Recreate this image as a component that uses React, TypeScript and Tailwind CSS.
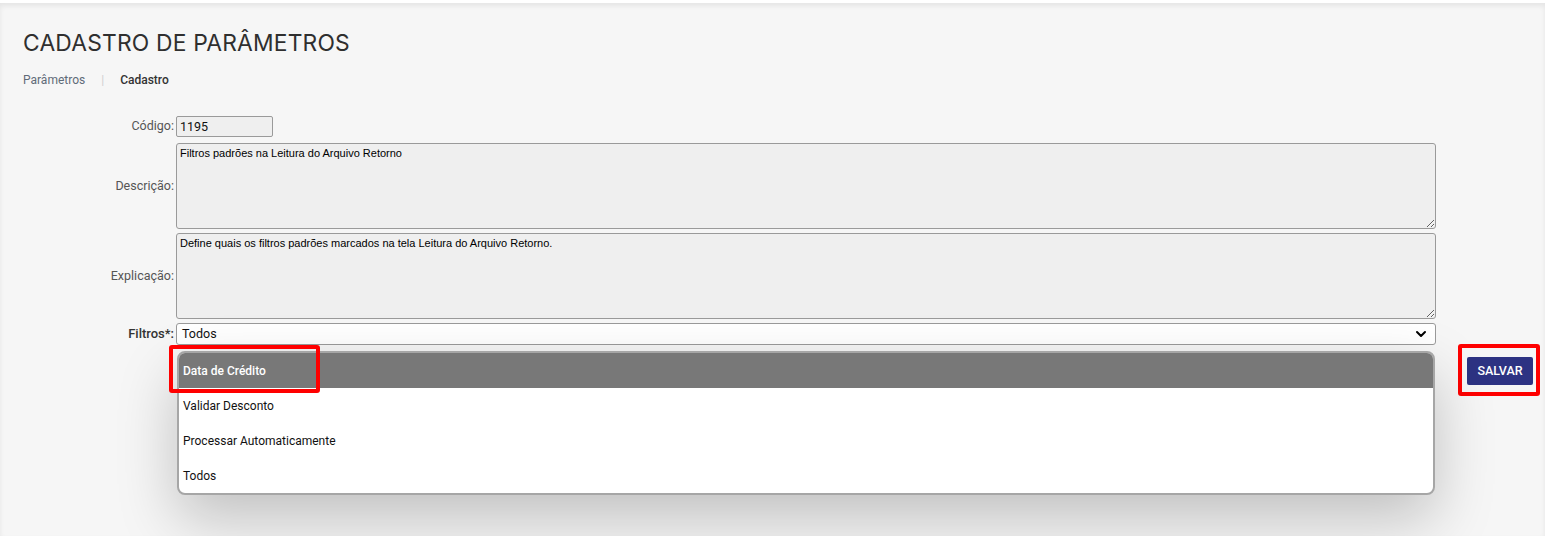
import { ChevronDown } from "lucide-react";

const options = ["Data de Crédito", "Validar Desconto", "Processar Automaticamente", "Todos"];

function Row({
  label,
  strong,
  children,
  className,
}: {
  label: string;
  strong?: boolean;
  children: React.ReactNode;
  className?: string;
}) {
  return (
    <div className={`flex items-center ${className ?? ""}`}>
      <label
        className={`w-[153px] shrink-0 pr-[2px] text-right ${
          strong ? "text-[13px] font-medium text-[#333]" : "text-[12.5px] text-[#555]"
        }`}
      >
        {label}
      </label>
      {children}
    </div>
  );
}

export default function App() {
  return (
    <div className="min-h-screen bg-white font-['Roboto',sans-serif]">
      <div className="h-[3px] bg-white" />
      <main className="min-h-[533px] bg-[#f6f6f6] px-[23px] pt-[26px] shadow-[inset_0_3px_5px_rgba(0,0,0,0.07)]">
        <h1 className="font-['Inter',sans-serif] text-[22.8px] leading-[28px] tracking-[0.2px] text-[#2f2f2f]">
          CADASTRO DE PARÂMETROS
        </h1>

        {/* Breadcrumb */}
        <nav className="mt-[15px] flex items-center text-[12px] leading-[16px]">
          <span className="text-[#5f6b78]">Parâmetros</span>
          <span className="mx-[16px] text-[#d0d0d0]">|</span>
          <span className="font-medium text-[#333]">Cadastro</span>
        </nav>

        <form className="mt-[28px] pr-[86px]">
          <Row label="Código:">
            <input
              readOnly
              value="1195"
              className="h-[21px] w-[97px] rounded-[2px] border border-[#9a9a9a] bg-[#efefef] px-[3px] text-[12.5px] text-[#111] outline-none"
            />
          </Row>

          <Row label="Descrição:" className="mt-[6px]">
            <textarea
              readOnly
              value="Filtros padrões na Leitura do Arquivo Retorno"
              className="h-[86px] flex-1 rounded-[3px] border border-[#9a9a9a] bg-[#efefef] px-[3px] py-[1px] font-['Liberation_Sans',sans-serif] text-[11px] text-black outline-none"
            />
          </Row>

          <Row label="Explicação:" className="mt-[4px]">
            <textarea
              readOnly
              value="Define quais os filtros padrões marcados na tela Leitura do Arquivo Retorno."
              className="h-[86px] flex-1 rounded-[3px] border border-[#9a9a9a] bg-[#efefef] px-[3px] py-[1px] font-['Liberation_Sans',sans-serif] text-[11px] text-black outline-none"
            />
          </Row>

          <Row label="Filtros*:" strong className="mt-[4px]">
            <div className="relative flex-1">
              <div className="flex h-[22px] items-center justify-between rounded-[3px] border border-[#9a9a9a] bg-white pl-[5px] pr-[6px] text-[12.5px] text-[#111]">
                <span>Todos</span>
                <ChevronDown size={16} strokeWidth={3} className="text-black" />
              </div>

              {/* Open options list */}
              <div className="absolute left-[1px] right-[1px] top-[28px] z-10">
                <ul className="overflow-hidden rounded-[8px] border-2 border-[#a6a6a6] bg-white text-[12px] text-[#111] shadow-[0_24px_60px_rgba(0,0,0,0.22)]">
                  {options.map((opt, i) => (
                    <li
                      key={opt}
                      className={`flex h-[35px] items-center px-[4px] ${
                        i === 0 ? "bg-[#787878] font-medium text-white" : ""
                      }`}
                    >
                      {opt}
                    </li>
                  ))}
                </ul>
                <div className="pointer-events-none absolute left-[-8px] top-[-6px] h-[48px] w-[151px] rounded-[3px] border-4 border-[#ff0000]" />
              </div>
            </div>
          </Row>
        </form>

        <div className="mt-[12px] flex justify-end">
          <div className="relative mr-[-11px]">
            <button
              type="button"
              className="h-[28px] w-[66px] rounded-[2px] bg-[#2d3383] text-[12.5px] font-medium text-white"
            >
              SALVAR
            </button>
            <div className="pointer-events-none absolute -bottom-[11px] -left-[9px] -right-[7px] -top-[13px] rounded-[3px] border-4 border-[#ff0000]" />
          </div>
        </div>
      </main>
    </div>
  );
}
